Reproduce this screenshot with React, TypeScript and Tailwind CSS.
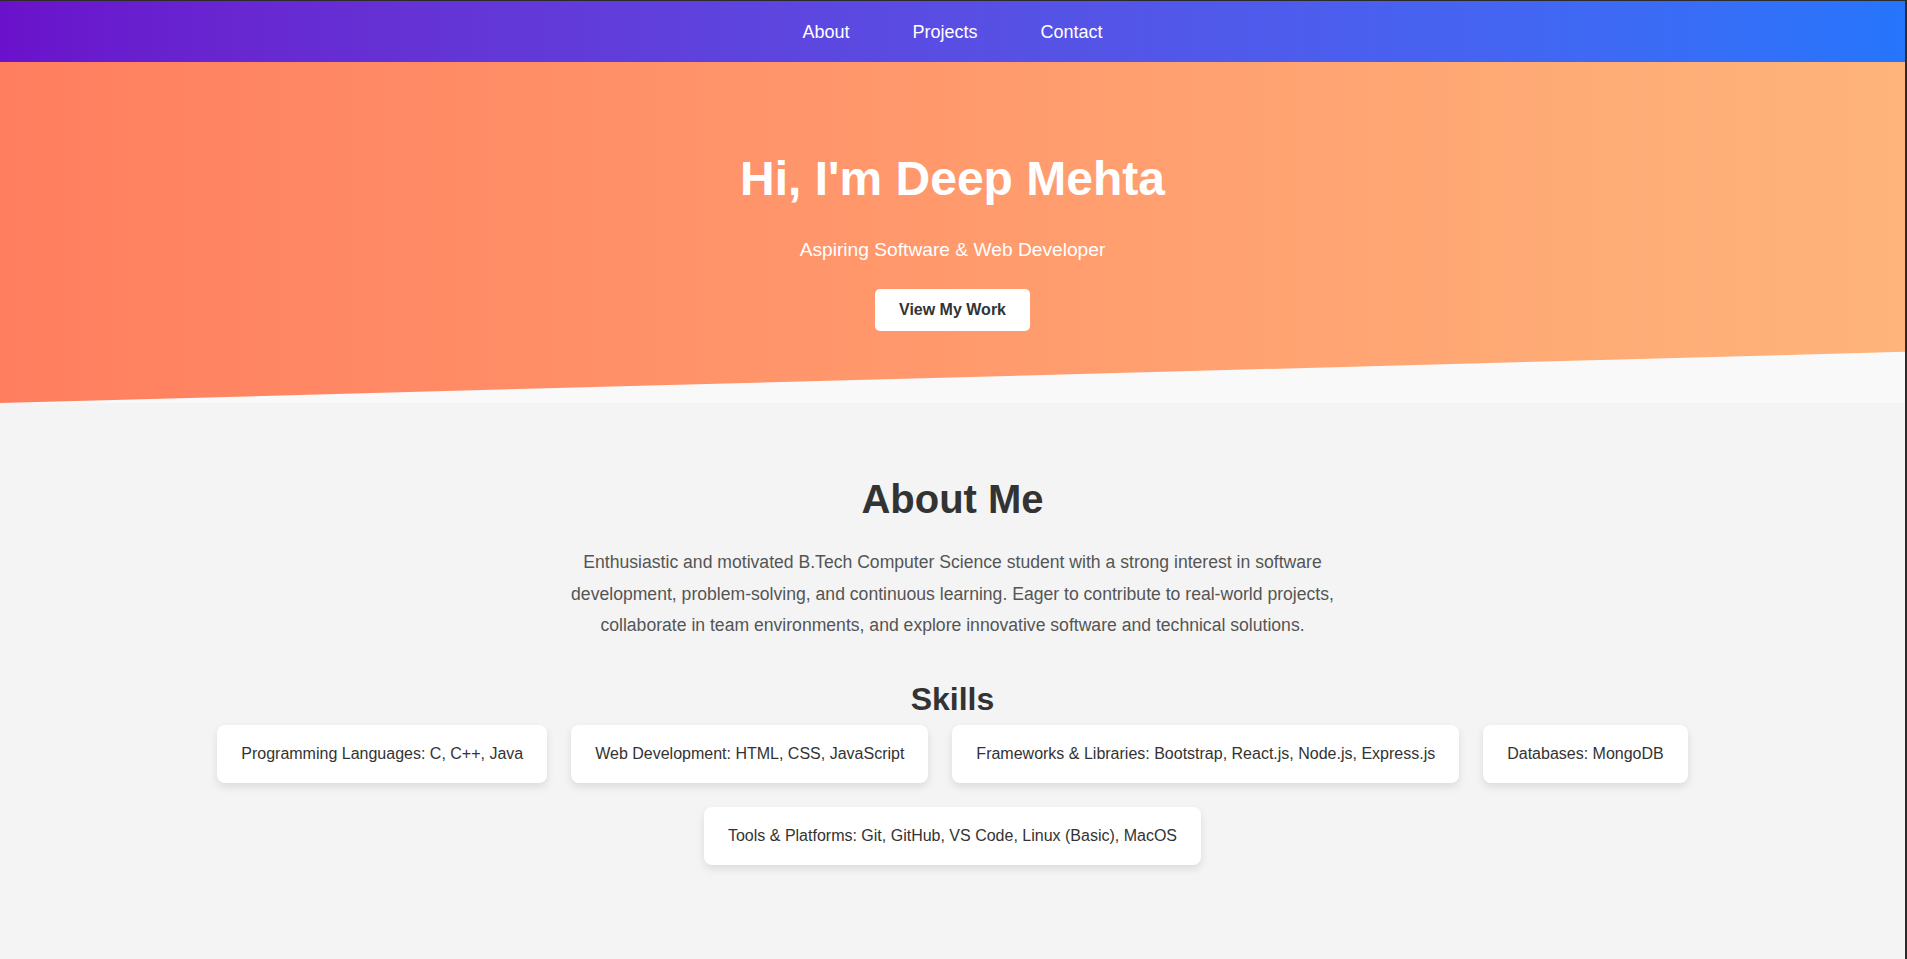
const skills = [
  "Programming Languages: C, C++, Java",
  "Web Development: HTML, CSS, JavaScript",
  "Frameworks & Libraries: Bootstrap, React.js, Node.js, Express.js",
  "Databases: MongoDB",
  "Tools & Platforms: Git, GitHub, VS Code, Linux (Basic), MacOS",
];

export default function App() {
  return (
    <div className="min-h-screen bg-[#2b2b2b] pt-px pr-[2px] font-['Liberation_Sans',Arial,sans-serif]">
      <div className="bg-[#f9f9f9] min-h-[958px]">
        <nav className="h-[61px] pt-[2px] flex items-center justify-center gap-[63px] bg-gradient-to-r from-[#6a11cb] to-[#2575fc] text-white text-[18px]">
          <a href="#about">About</a>
          <a href="#projects">Projects</a>
          <a href="#contact">Contact</a>
        </nav>

        <header className="h-[341px] flex flex-col items-center text-center text-white bg-gradient-to-r from-[#ff7e5f] to-[#feb47b] [clip-path:polygon(0_0,100%_0,100%_85%,0_100%)]">
          <h1 className="mt-[89px] text-[48px] font-bold leading-[55px]">Hi, I'm Deep Mehta</h1>
          <p className="mt-[33px] text-[19.2px] leading-[22px]">Aspiring Software &amp; Web Developer</p>
          <button className="mt-[28px] h-[42px] px-6 bg-white text-[#333] text-[16px] font-bold rounded-[5px]">
            View My Work
          </button>
        </header>

        <section id="about" className="bg-[#f4f4f4] pt-[73px] pb-[120px] px-5 flex flex-col items-center text-center">
          <h2 className="text-[40px] font-bold leading-[46px] text-[#333]">About Me</h2>
          <p className="mt-[25px] max-w-[800px] text-[17.6px] leading-[1.8] text-[#555]">
            Enthusiastic and motivated B.Tech Computer Science student with a strong interest in software
            development, problem-solving, and continuous learning. Eager to contribute to real-world projects,
            collaborate in team environments, and explore innovative software and technical solutions.
          </p>

          <h2 className="mt-[39px] text-[32px] font-bold leading-[37px] text-[#333]">Skills</h2>
          <div className="mt-[7px] flex flex-wrap justify-center gap-6">
            {skills.map((s) => (
              <div
                key={s}
                className="bg-white rounded-lg px-6 py-5 text-[16px] leading-[18px] text-[#333] shadow-[0_4px_8px_rgba(0,0,0,0.1)]"
              >
                {s}
              </div>
            ))}
          </div>
        </section>
      </div>
    </div>
  );
}
